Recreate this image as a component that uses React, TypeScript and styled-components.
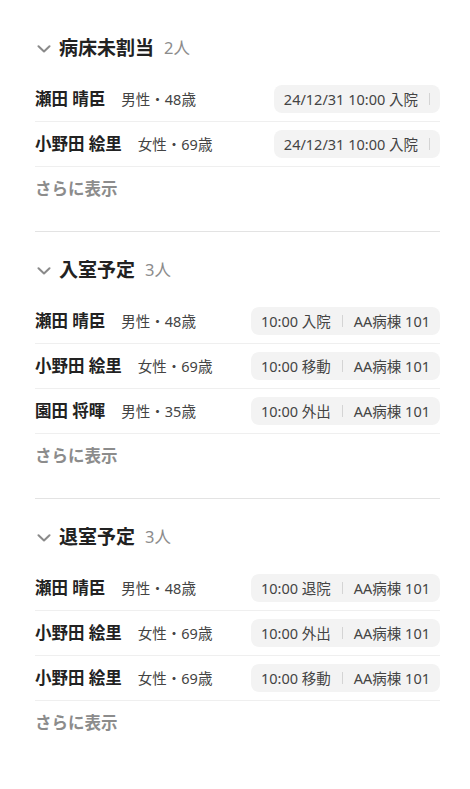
import React from 'react';
import styled, { createGlobalStyle } from 'styled-components';

const GlobalStyle = createGlobalStyle`
  body {
    margin: 0;
    background: #ffffff;
    font-family: 'Noto Sans', 'Noto Sans CJK JP', sans-serif;
    color: #222222;
  }
`;

type Patient = {
  name: string;
  info: string;
  main: string;
  sub?: string;
};

type Group = {
  title: string;
  count: string;
  patients: Patient[];
};

const groups: Group[] = [
  {
    title: '病床未割当',
    count: '2人',
    patients: [
      { name: '瀬田 晴臣', info: '男性・48歳', main: '24/12/31 10:00 入院' },
      { name: '小野田 絵里', info: '女性・69歳', main: '24/12/31 10:00 入院' },
    ],
  },
  {
    title: '入室予定',
    count: '3人',
    patients: [
      { name: '瀬田 晴臣', info: '男性・48歳', main: '10:00 入院', sub: 'AA病棟 101' },
      { name: '小野田 絵里', info: '女性・69歳', main: '10:00 移動', sub: 'AA病棟 101' },
      { name: '園田 将暉', info: '男性・35歳', main: '10:00 外出', sub: 'AA病棟 101' },
    ],
  },
  {
    title: '退室予定',
    count: '3人',
    patients: [
      { name: '瀬田 晴臣', info: '男性・48歳', main: '10:00 退院', sub: 'AA病棟 101' },
      { name: '小野田 絵里', info: '女性・69歳', main: '10:00 外出', sub: 'AA病棟 101' },
      { name: '小野田 絵里', info: '女性・69歳', main: '10:00 移動', sub: 'AA病棟 101' },
    ],
  },
];

function Chevron() {
  return (
    <svg width="14" height="8" viewBox="0 0 14 8" fill="none">
      <polyline points="1.5,1.2 7,6.5 12.5,1.2" stroke="#8a8a8a" strokeWidth="2" strokeLinecap="round" strokeLinejoin="round" />
    </svg>
  );
}

export default function App() {
  return (
    <Page>
      <GlobalStyle />
      {groups.map((g, i) => (
        <Section key={i} $last={i === groups.length - 1}>
          <Header>
            <Chevron />
            <Title>{g.title}</Title>
            <Count>{g.count}</Count>
          </Header>
          <List>
            {g.patients.map((p, j) => (
              <Row key={j}>
                <Name>{p.name}</Name>
                <Info>{p.info}</Info>
                <Chip>
                  <span>{p.main}</span>
                  <Sep />
                  {p.sub && <span>{p.sub}</span>}
                </Chip>
              </Row>
            ))}
          </List>
          <More>さらに表示</More>
        </Section>
      ))}
    </Page>
  );
}

const Page = styled.div`
  padding: 33px 30px 40px 35px;
`;

const Section = styled.section<{ $last: boolean }>`
  padding-bottom: 20px;
  border-bottom: ${(p) => (p.$last ? 'none' : '1px solid #e3e3e3')};
  & + & {
    padding-top: 23px;
  }
`;

const Header = styled.div`
  display: flex;
  align-items: center;
  height: 30px;
  padding-left: 2px;
  svg {
    margin-right: 8px;
    margin-top: 1px;
  }
`;

const Title = styled.h2`
  margin: 0;
  font-size: 19px;
  line-height: 30px;
  font-weight: 700;
  color: #222222;
`;

const Count = styled.span`
  margin-left: 10px;
  font-size: 16.5px;
  line-height: 30px;
  color: #8c8c8c;
`;

const List = styled.div`
  margin-top: 14px;
  display: flex;
  flex-direction: column;
`;

const Row = styled.div`
  display: flex;
  align-items: center;
  height: 44px;
  border-bottom: 1px solid #efefef;
`;

const Name = styled.span`
  font-size: 16.5px;
  line-height: 24px;
  font-weight: 700;
  color: #222222;
`;

const Info = styled.span`
  margin-left: 16px;
  font-size: 14.5px;
  line-height: 20px;
  color: #444444;
`;

const Chip = styled.div`
  margin-left: auto;
  display: flex;
  align-items: center;
  gap: 11px;
  height: 28px;
  padding: 0 10px;
  border-radius: 8px;
  background: #f3f3f3;
  font-size: 14.5px;
  line-height: 20px;
  color: #444444;
`;

const Sep = styled.i`
  width: 1px;
  height: 12px;
  background: #d4d4d4;
`;

const More = styled.div`
  padding: 10px 0;
  line-height: 24px;
  font-size: 16.5px;
  font-weight: 700;
  color: #8c8c8c;
`;
